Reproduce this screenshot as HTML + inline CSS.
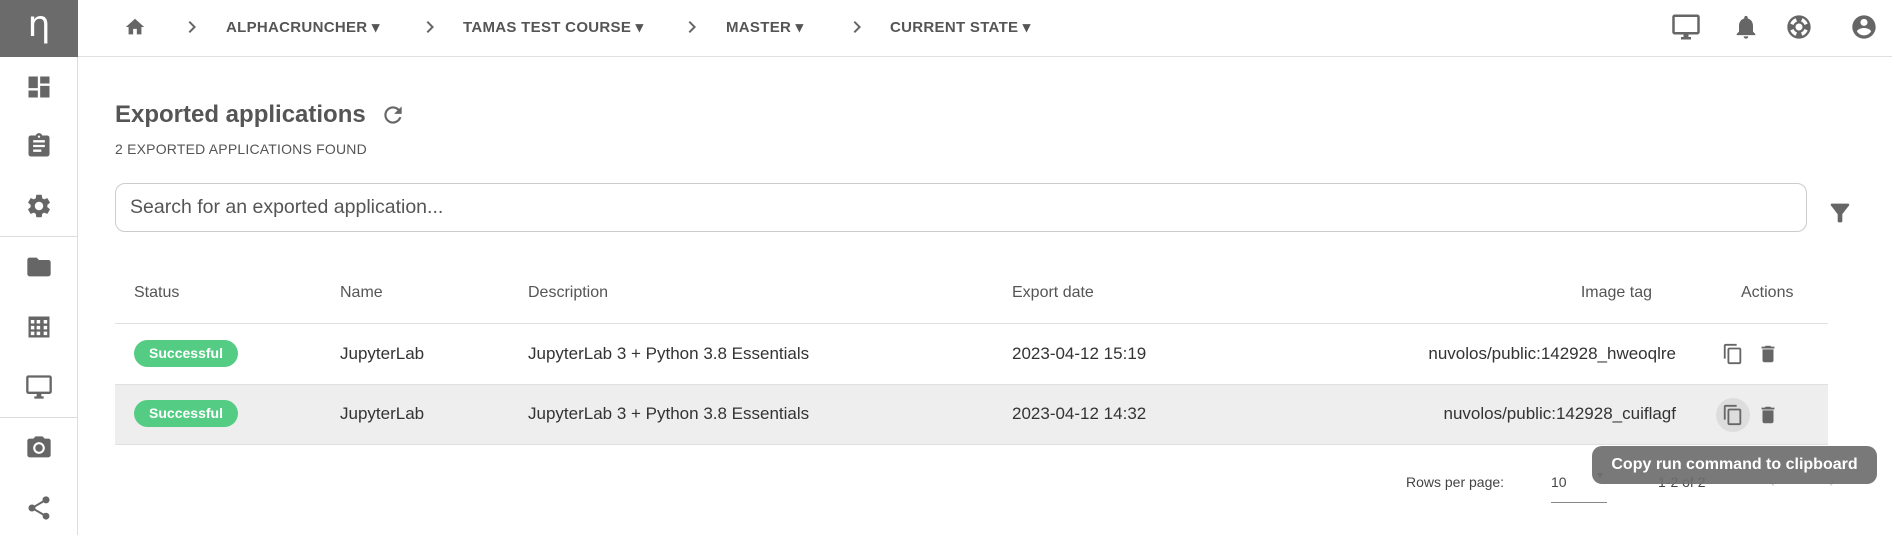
<!DOCTYPE html>
<html><head><meta charset="utf-8"><style>
*{margin:0;padding:0;box-sizing:border-box}
body{width:1892px;height:535px;overflow:hidden;background:#fff;font-family:"Liberation Sans",sans-serif;color:#555;position:relative}
.a{position:absolute}
svg{fill:#666}
.side{left:0;top:0;width:78px;height:535px;border-right:1px solid #ddd}
.bc{font-size:15px;font-weight:bold;color:#555;top:18px;letter-spacing:.3px}
.th{font-size:16px;color:#555;top:284px}
.td{font-size:17px;color:#333}
.badge{background:#55cc83;color:#fff;border-radius:14px;font-size:14px;font-weight:bold;width:104px;height:27px;line-height:27px;text-align:center}
.hl{left:115px;width:1713px;height:1px;background:#e0e0e0}
</style></head><body>
<div class="a side"></div>
<div class="a" style="left:0;top:0;width:78px;height:57px;background:#6b6b6b;color:#fff;font-family:'DejaVu Sans',sans-serif;font-size:36px;text-align:center;line-height:50px">η</div>
<div class="a" style="left:78px;top:56px;width:1814px;height:1px;background:#e0e0e0"></div>
<div class="a" style="left:0;top:236px;width:78px;height:1px;background:#ddd"></div>
<div class="a" style="left:0;top:417px;width:78px;height:1px;background:#ddd"></div>
<svg class="a" style="left:25px;top:73px" width="28" height="28" viewBox="0 0 24 24"><path d="M3 13h8V3H3v10zm0 8h8v-6H3v6zm10 0h8V11h-8v10zm0-18v6h8V3h-8z"/></svg>
<svg class="a" style="left:25px;top:132px" width="28" height="28" viewBox="0 0 24 24"><path d="M19 3h-4.18C14.4 1.84 13.3 1 12 1s-2.4.84-2.820 2H5c-1.1 0-2 .9-2 2v14c0 1.1.9 2 2 2h14c1.1 0 2-.9 2-2V5c0-1.1-.9-2-2-2zm-7 0c.55 0 1 .45 1 1s-.45 1-1 1-1-.45-1-1 .45-1 1-1zm2 14H7v-2h7v2zm3-4H7v-2h10v2zm0-4H7V7h10v2z"/></svg>
<svg class="a" style="left:25px;top:192px" width="28" height="28" viewBox="0 0 24 24"><path d="M19.14 12.94c.04-.3.06-.61.06-.94 0-.32-.02-.64-.07-.94l2.030-1.58a.49.49 0 00.12-.61l-1.920-3.32a.488.488 0 00-.59-.22l-2.390.96c-.5-.38-1.030-.7-1.620-.94l-.36-2.54a.484.484 0 00-.48-.41h-3.84c-.24 0-.43.17-.47.41l-.36 2.54c-.59.24-1.130.57-1.620.94l-2.390-.96c-.22-.08-.47 0-.59.22L2.74 8.870c-.12.21-.08.47.12.61l2.030 1.580c-.05.3-.09.63-.09.94s.02.64.07.94l-2.030 1.580a.49.49 0 00-.12.61l1.920 3.320c.12.22.37.29.59.22l2.390-.96c.5.38 1.030.7 1.620.94l.36 2.540c.05.24.24.41.48.41h3.840c.24 0 .44-.17.47-.41l.36-2.540c.59-.24 1.130-.56 1.620-.94l2.390.96c.22.08.47 0 .59-.22l1.920-3.320c.12-.22.07-.47-.12-.61l-2.010-1.580zM12 15.6c-1.980 0-3.6-1.620-3.6-3.6s1.620-3.6 3.6-3.6 3.6 1.620 3.6 3.6-1.620 3.6-3.6 3.6z"/></svg>
<svg class="a" style="left:25px;top:253px" width="28" height="28" viewBox="0 0 24 24"><path d="M10 4H4c-1.1 0-2 .9-2 2v12c0 1.1.9 2 2 2h16c1.1 0 2-.9 2-2V8c0-1.1-.9-2-2-2h-8l-2-2z"/></svg>
<svg class="a" style="left:25px;top:313px" width="28" height="28" viewBox="0 0 24 24"><path d="M3 3v18h18V3H3zm5 16H5v-3h3v3zm0-5H5v-3h3v3zm0-5H5V6h3v3zm5 10h-3v-3h3v3zm0-5h-3v-3h3v3zm0-5h-3V6h3v3zm6 10h-3v-3h3v3zm0-5h-3v-3h3v3zm0-5h-3V6h3v3z"/></svg>
<svg class="a" style="left:25px;top:373px" width="28" height="28" viewBox="0 0 24 24"><path d="M21 2H3c-1.1 0-2 .9-2 2v12c0 1.1.9 2 2 2h7v2H8v2h8v-2h-2v-2h7c1.1 0 2-.9 2-2V4c0-1.1-.9-2-2-2zm0 14H3V4h18v12z"/></svg>
<svg class="a" style="left:25px;top:434px" width="28" height="28" viewBox="0 0 24 24"><circle cx="12" cy="12" r="3.2"/><path d="M9 2L7.17 4H4c-1.1 0-2 .9-2 2v12c0 1.1.9 2 2 2h16c1.1 0 2-.9 2-2V6c0-1.1-.9-2-2-2h-3.17L15 2H9zm3 15c-2.76 0-5-2.24-5-5s2.24-5 5-5 5 2.24 5 5-2.24 5-5 5z"/></svg>
<svg class="a" style="left:25px;top:494px" width="28" height="28" viewBox="0 0 24 24"><path d="M18 16.08c-.76 0-1.44.3-1.96.77L8.91 12.7c.05-.23.09-.46.09-.7s-.04-.47-.09-.7l7.05-4.11c.54.5 1.25.81 2.04.81 1.66 0 3-1.34 3-3s-1.34-3-3-3-3 1.34-3 3c0 .24.04.47.09.7L8.04 9.81C7.5 9.31 6.79 9 6 9c-1.66 0-3 1.34-3 3s1.34 3 3 3c.79 0 1.5-.31 2.04-.81l7.12 4.16c-.05.21-.08.43-.08.65 0 1.61 1.31 2.92 2.92 2.92s2.92-1.31 2.92-2.92-1.31-2.92-2.92-2.92z"/></svg>
<svg class="a" style="left:124px;top:16px" width="22" height="22" viewBox="0 0 24 24"><path d="M10 20v-6h4v6h5v-8h3L12 3 2 12h3v8z"/></svg>
<svg class="a" style="left:180px;top:15px" width="24" height="24" viewBox="0 0 24 24"><path d="M10 6L8.59 7.41 13.17 12l-4.58 4.59L10 18l6-6z"/></svg>
<svg class="a" style="left:418px;top:15px" width="24" height="24" viewBox="0 0 24 24"><path d="M10 6L8.59 7.41 13.17 12l-4.58 4.59L10 18l6-6z"/></svg>
<svg class="a" style="left:680px;top:15px" width="24" height="24" viewBox="0 0 24 24"><path d="M10 6L8.59 7.41 13.17 12l-4.58 4.59L10 18l6-6z"/></svg>
<svg class="a" style="left:845px;top:15px" width="24" height="24" viewBox="0 0 24 24"><path d="M10 6L8.59 7.41 13.17 12l-4.58 4.59L10 18l6-6z"/></svg>
<div class="a bc" style="left:226px">ALPHACRUNCHER ▾</div>
<div class="a bc" style="left:463px">TAMAS TEST COURSE ▾</div>
<div class="a bc" style="left:726px">MASTER ▾</div>
<div class="a bc" style="left:890px">CURRENT STATE ▾</div>
<svg class="a" style="left:1671px;top:12px" width="30" height="30" viewBox="0 0 24 24"><path d="M21 2H3c-1.1 0-2 .9-2 2v12c0 1.1.9 2 2 2h7v2H8v2h8v-2h-2v-2h7c1.1 0 2-.9 2-2V4c0-1.1-.9-2-2-2zm0 14H3V4h18v12z"/></svg>
<svg class="a" style="left:1732px;top:13px" width="28" height="28" viewBox="0 0 24 24"><path d="M12 22c1.1 0 2-.9 2-2h-4c0 1.1.89 2 2 2zm6-6v-5c0-3.07-1.64-5.64-4.5-6.32V4c0-.83-.67-1.5-1.5-1.5s-1.5.67-1.5 1.5v.68C7.63 5.36 6 7.92 6 11v5l-2 2v1h16v-1l-2-2z"/></svg>
<svg class="a" style="left:1785px;top:13px" width="28" height="28" viewBox="0 0 24 24"><path d="M12 2C6.48 2 2 6.48 2 12s4.48 10 10 10 10-4.48 10-10S17.52 2 12 2zm7.46 7.12l-2.78 1.15a4.98 4.98 0 00-2.95-2.94l1.15-2.78c2.1.8 3.77 2.47 4.58 4.57zM12 15c-1.66 0-3-1.34-3-3s1.34-3 3-3 3 1.34 3 3-1.34 3-3 3zM9.13 4.54l1.17 2.78a5 5 0 00-2.98 2.97L4.54 9.13a7.984 7.984 0 014.59-4.59zM4.54 14.87l2.78-1.15a4.97 4.97 0 002.97 2.96l-1.17 2.78a7.996 7.996 0 01-4.58-4.59zm10.34 4.59l-1.15-2.78a4.98 4.98 0 002.95-2.97l2.78 1.17a8.007 8.007 0 01-4.58 4.58z"/></svg>
<svg class="a" style="left:1850px;top:13px" width="28" height="28" viewBox="0 0 24 24"><path d="M12 2C6.48 2 2 6.48 2 12s4.48 10 10 10 10-4.48 10-10S17.52 2 12 2zm0 3c1.66 0 3 1.34 3 3s-1.34 3-3 3-3-1.34-3-3 1.34-3 3-3zm0 14.2c-2.5 0-4.71-1.28-6-3.22.03-1.99 4-3.08 6-3.08 1.99 0 5.97 1.09 6 3.08-1.29 1.94-3.5 3.22-6 3.22z"/></svg>
<div class="a" style="left:115px;top:101px;font-size:24px;font-weight:bold;color:#555">Exported applications</div>
<svg class="a" style="left:380px;top:102px" width="26" height="26" viewBox="0 0 24 24"><path d="M17.65 6.35A7.958 7.958 0 0012 4c-4.42 0-7.99 3.58-7.99 8s3.57 8 7.99 8c3.73 0 6.84-2.55 7.73-6h-2.08A5.99 5.99 0 0112 18c-3.310 0-6-2.690-6-6s2.690-6 6-6c1.660 0 3.140.69 4.220 1.780L13 11h7V4l-2.350 2.350z"/></svg>
<div class="a" style="left:115px;top:141px;font-size:14px;color:#555;letter-spacing:.2px">2 EXPORTED APPLICATIONS FOUND</div>
<div class="a" style="left:115px;top:183px;width:1692px;height:49px;border:1px solid #ccc;border-radius:10px"></div>
<div class="a" style="left:130px;top:196px;font-size:19.5px;color:#555">Search for an exported application...</div>
<svg class="a" style="left:1826px;top:199px" width="28" height="28" viewBox="0 0 24 24"><path d="M4.25 5.61C6.27 8.2 10 13 10 13v6c0 .55.45 1 1 1h2c.55 0 1-.45 1-1v-6s3.72-4.8 5.74-7.39A.998.998 0 0018.95 4H5.04c-.83 0-1.3.95-.79 1.61z"/></svg>
<div class="a th" style="left:134px">Status</div>
<div class="a th" style="left:340px">Name</div>
<div class="a th" style="left:528px">Description</div>
<div class="a th" style="left:1012px">Export date</div>
<div class="a th" style="left:1540px;width:112px;text-align:right">Image tag</div>
<div class="a th" style="left:1741px">Actions</div>
<div class="a hl" style="top:323px"></div>
<div class="a" style="left:115px;top:385px;width:1713px;height:59px;background:#eee"></div>
<div class="a hl" style="top:384px"></div>
<div class="a hl" style="top:444px"></div>
<div class="a badge" style="left:134px;top:340px">Successful</div>
<div class="a badge" style="left:134px;top:400px">Successful</div>
<div class="a td" style="left:340px;top:344px">JupyterLab</div>
<div class="a td" style="left:340px;top:404px">JupyterLab</div>
<div class="a td" style="left:528px;top:344px">JupyterLab 3 + Python 3.8 Essentials</div>
<div class="a td" style="left:528px;top:404px">JupyterLab 3 + Python 3.8 Essentials</div>
<div class="a td" style="left:1012px;top:344px">2023-04-12 15:19</div>
<div class="a td" style="left:1012px;top:404px">2023-04-12 14:32</div>
<div class="a td" style="left:1280px;width:396px;text-align:right;top:344px">nuvolos/public:142928_hweoqlre</div>
<div class="a td" style="left:1280px;width:396px;text-align:right;top:404px">nuvolos/public:142928_cuiflagf</div>
<div class="a" style="left:1716px;top:398px;width:34px;height:34px;border-radius:50%;background:#ddd"></div>
<svg class="a" style="left:1722px;top:343px" width="22" height="22" viewBox="0 0 24 24"><path d="M16 1H4c-1.1 0-2 .9-2 2v14h2V3h12V1zm3 4H8c-1.1 0-2 .9-2 2v14c0 1.1.9 2 2 2h11c1.1 0 2-.9 2-2V7c0-1.1-.9-2-2-2zm0 16H8V7h11v14z"/></svg>
<svg class="a" style="left:1722px;top:404px" width="22" height="22" viewBox="0 0 24 24"><path d="M16 1H4c-1.1 0-2 .9-2 2v14h2V3h12V1zm3 4H8c-1.1 0-2 .9-2 2v14c0 1.1.9 2 2 2h11c1.1 0 2-.9 2-2V7c0-1.1-.9-2-2-2zm0 16H8V7h11v14z"/></svg>
<svg class="a" style="left:1757px;top:343px" width="22" height="22" viewBox="0 0 24 24"><path d="M6 19c0 1.1.9 2 2 2h8c1.1 0 2-.9 2-2V7H6v12zM19 4h-3.5l-1-1h-5l-1 1H5v2h14V4z"/></svg>
<svg class="a" style="left:1757px;top:404px" width="22" height="22" viewBox="0 0 24 24"><path d="M6 19c0 1.1.9 2 2 2h8c1.1 0 2-.9 2-2V7H6v12zM19 4h-3.5l-1-1h-5l-1 1H5v2h14V4z"/></svg>
<div class="a" style="left:1406px;top:474px;font-size:14px;color:#444">Rows per page:</div>
<div class="a" style="left:1551px;top:474px;font-size:14px;color:#444">10</div>
<div class="a" style="left:1551px;top:502px;width:56px;height:1px;background:#888"></div>
<div class="a" style="left:1597px;top:468px;font-size:12px;color:#777">▾</div>
<div class="a" style="left:1658px;top:474px;font-size:14px;color:#444">1-2 of 2</div>
<div class="a" style="left:1769px;top:471px;font-size:18px;color:#ccc">‹</div>
<div class="a" style="left:1829px;top:471px;font-size:18px;color:#ccc">›</div>
<div class="a" style="left:1592px;top:446px;width:285px;height:38px;border-radius:10px;background:rgba(110,110,110,.92);color:#fff;font-size:16px;font-weight:bold;text-align:center;line-height:38px">Copy run command to clipboard</div>
</body></html>
